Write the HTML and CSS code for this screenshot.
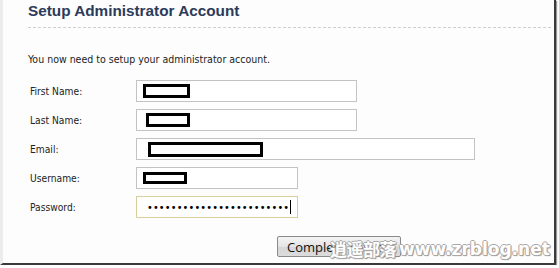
FILE: index.html
```html
<!DOCTYPE html>
<html>
<head>
<meta charset="utf-8">
<link rel="stylesheet" href="styles.css">
</head>
<body>
<div class="frame">
  <div class="page">
    <h1 class="title">Setup Administrator Account</h1>
    <div class="rule"></div>
    <p class="intro">You now need to setup your administrator account.</p>
    <div class="form">
      <div class="row">
        <span class="label">First Name:</span>
        <div class="field w-md"><span class="redact r-first"></span></div>
      </div>
      <div class="row">
        <span class="label">Last Name:</span>
        <div class="field w-md"><span class="redact r-last"></span></div>
      </div>
      <div class="row">
        <span class="label">Email:</span>
        <div class="field w-lg"><span class="redact r-email"></span></div>
      </div>
      <div class="row">
        <span class="label">Username:</span>
        <div class="field w-sm"><span class="redact r-user"></span></div>
      </div>
      <div class="row">
        <span class="label">Password:</span>
        <div class="field w-sm focus"><span class="dots">••••••••••••••••••••••••</span><span class="caret"></span></div>
      </div>
    </div>
    <div class="actions">
      <button class="btn">Complete Setup »</button>
    </div>
  </div>
  <div class="watermark"><span class="wm-cn">逍遥部落</span><span class="wm-en">www.zrblog.net</span></div>
</div>
</body>
</html>
```

FILE: styles.css
```css
html, body {
  margin: 0;
  padding: 0;
  background: #ffffff;
}
.frame {
  position: relative;
  width: 556px;
  height: 265px;
  box-sizing: border-box;
  border-left: 3px solid #ececec;
  border-right: 2px solid #3a3a3a;
  border-bottom: 2px solid #3a3a3a;
  box-shadow: 1px 1px 1px #9a9a9a;
  background: #fdfdfd;
}
.page {
  padding: 0 0 0 25px;
  font-family: "DejaVu Sans Condensed", "DejaVu Sans", sans-serif;
  color: #222;
}
.title {
  margin: 0;
  padding-top: 1px;
  font-family: "Liberation Sans", Arial, sans-serif;
  font-size: 15.3px;
  font-weight: bold;
  color: #2c3b5a;
  line-height: 20px;
}
.rule {
  margin-top: 6px;
  margin-right: 3px;
  border-top: 1px dashed #cfcfcf;
}
.intro {
  margin: 25px 0 0 0;
  font-size: 10.5px;
  line-height: 13px;
  color: #222;
}
.form {
  margin-top: 14px;
  display: flex;
  flex-direction: column;
  gap: 7px;
}
.row {
  display: flex;
  align-items: center;
  height: 22px;
}
.label {
  width: 106px;
  padding-left: 2px;
  font-size: 10.2px;
  color: #222;
}
.field {
  box-sizing: border-box;
  height: 22px;
  border: 1px solid #c3c3c3;
  background: #fff;
  display: flex;
  align-items: center;
}
.w-md { width: 221px; }
.w-lg { width: 339px; }
.w-sm { width: 162px; }
.focus { border-color: #d8cf9c; }
.redact {
  box-sizing: border-box;
  border: 3px solid #000;
  background: #fff;
  display: block;
}
.r-first { width: 47px; height: 14px; margin-left: 6px; }
.r-last { width: 44px; height: 14px; margin-left: 9px; }
.r-email { width: 115px; height: 15px; margin-left: 11px; }
.r-user { width: 44px; height: 12px; margin-left: 6px; }
.dots {
  margin-left: 10px;
  font-family: "DejaVu Sans", sans-serif;
  font-size: 9.8px;
  letter-spacing: 0.15px;
  color: #000;
}
.caret {
  width: 1px;
  height: 14px;
  background: #000;
  margin-left: 1px;
}
.actions {
  margin-top: 18px;
  padding-left: 249px;
}
.btn {
  width: 124px;
  height: 21px;
  padding: 0;
  border: 1px solid #8a8a8a;
  border-radius: 2px;
  background: linear-gradient(#f4f4f4, #e4e4e4 50%, #d6d6d6 51%, #dcdcdc);
  font-family: "Open Sans", "Liberation Sans", sans-serif;
  font-size: 13px;
  color: #111;
  text-align: left;
  padding-left: 9px;
  line-height: 18px;
}
.watermark {
  position: absolute;
  left: 327px;
  top: 236px;
  display: flex;
  align-items: center;
  gap: 3px;
  font-weight: bold;
  color: #ffffff;
  text-shadow:
    1px 0 0 #a8a8a8, -1px 0 0 #a8a8a8, 0 1px 0 #a8a8a8, 0 -1px 0 #a8a8a8,
    1px 1px 1px #808080;
}
.wm-cn {
  font-family: "Noto Sans CJK SC", sans-serif;
  font-size: 17px;
  letter-spacing: -0.5px;
}
.wm-en {
  font-family: "DejaVu Sans", sans-serif;
  font-size: 17px;
  letter-spacing: 0px;
}
```
